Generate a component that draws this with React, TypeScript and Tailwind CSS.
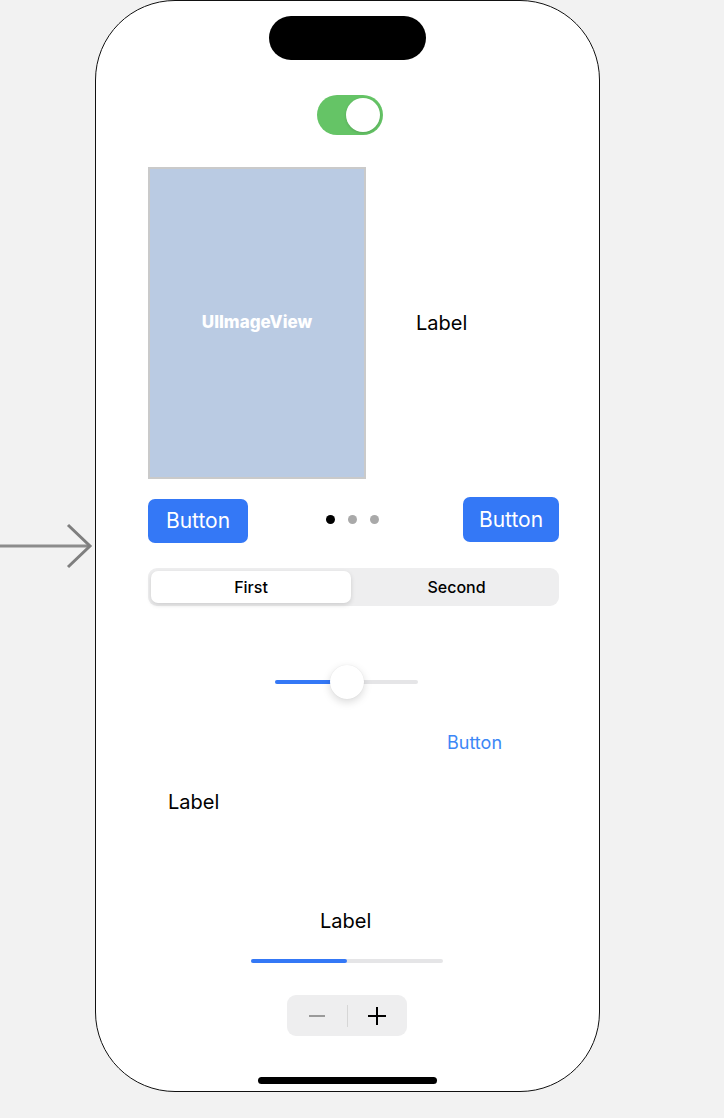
import React from "react";

export default function App() {
  return (
    <div
      className="w-[724px] h-[1118px] bg-[#f2f2f2] flex items-start overflow-hidden"
      style={{ fontFamily: "Inter, 'Noto Sans', sans-serif" }}
    >
      <div className="w-[95px] h-[1092px] flex items-center">
        <svg width="95" height="50" viewBox="0 0 95 50">
          <line x1="0" y1="25" x2="89" y2="25" stroke="#8c8c8c" strokeWidth="3" />
          <polyline points="68,4 90,25 68,46" fill="none" stroke="#7f7f7f" strokeWidth="3" />
        </svg>
      </div>
      <div className="w-[505px] h-[1092px] rounded-[80px] border border-[#111] bg-white flex flex-col">
        {/* notch */}
        <div className="mt-[15px] ml-[173px] w-[157px] h-[44px] rounded-full bg-black" />
        {/* toggle */}
        <div className="mt-[35px] ml-[221px] w-[66px] h-[40px] rounded-full bg-[#65c466] flex items-center justify-end pr-[3px]">
          <div className="w-[34px] h-[34px] rounded-full bg-white shadow-[0_1px_3px_rgba(0,0,0,0.15)]" />
        </div>
        {/* image row */}
        <div className="mt-[32px] flex items-center">
          <div className="ml-[52px] w-[218px] h-[312px] border-2 border-[#cacaca] bg-[#bacbe3] flex items-center justify-center">
            <span className="text-white text-[17px] font-extrabold">UIImageView</span>
          </div>
          <span className="ml-[50px] text-[20px] text-black leading-[24px]">Label</span>
        </div>
        {/* buttons row */}
        <div className="mt-[18px] ml-[52px] w-[411px] flex items-start">
          <button className="mt-[2px] w-[100px] h-[44px] rounded-[7px] bg-[#3478f6] text-white text-[21px] flex items-center justify-center">
            Button
          </button>
          <div className="ml-[78px] h-[45px] flex items-center gap-[13px]">
            <div className="w-[9px] h-[9px] rounded-full bg-black" />
            <div className="w-[9px] h-[9px] rounded-full bg-[#a9a9a9]" />
            <div className="w-[9px] h-[9px] rounded-full bg-[#a9a9a9]" />
          </div>
          <button className="ml-auto w-[96px] h-[45px] rounded-[7px] bg-[#3478f6] text-white text-[21px] flex items-center justify-center">
            Button
          </button>
        </div>
        {/* segmented */}
        <div className="mt-[25px] ml-[52px] w-[411px] h-[38px] rounded-[9px] bg-[#eeeeef] p-[3px] flex">
          <div className="w-[200px] h-full rounded-[7px] bg-white shadow-[0_2px_5px_rgba(0,0,0,0.14)] flex items-center justify-center text-[16px] font-medium text-black">
            First
          </div>
          <div className="flex-1 h-full pl-[6px] flex items-center justify-center text-[16px] font-medium text-black">
            Second
          </div>
        </div>
        {/* slider */}
        <div className="mt-[59px] ml-[179px] w-[143px] h-[34px] relative flex items-center">
          <div className="w-full h-[4px] rounded-full bg-[#e5e5e7] flex">
            <div className="w-[57px] h-full rounded-full bg-[#3478f6]" />
          </div>
          <div className="absolute left-[55px] top-0 w-[34px] h-[34px] rounded-full bg-white shadow-[0_3px_8px_rgba(0,0,0,0.15),0_0_1px_rgba(0,0,0,0.1)]" />
        </div>
        {/* blue text button */}
        <div className="mt-[33px] ml-[351px] text-[18px] leading-[22px] text-[#3c87f6]">Button</div>
        {/* label */}
        <div className="mt-[36px] ml-[72px] text-[20px] leading-[24px] text-black">Label</div>
        {/* center label */}
        <div className="mt-[95px] ml-[224px] text-[20px] leading-[24px] text-black">Label</div>
        {/* progress */}
        <div className="mt-[26px] ml-[155px] w-[192px] h-[4px] rounded-full bg-[#e5e5e7] flex">
          <div className="w-[96px] h-full rounded-full bg-[#3478f6]" />
        </div>
        {/* stepper */}
        <div className="mt-[32px] ml-[191px] w-[120px] h-[41px] rounded-[9px] bg-[#eeeeef] flex items-center">
          <div className="flex-1 flex items-center justify-center">
            <svg width="18" height="18" viewBox="0 0 18 18">
              <line x1="1" y1="9" x2="17" y2="9" stroke="#9a9a9a" strokeWidth="2" />
            </svg>
          </div>
          <div className="w-px h-[22px] bg-[#d6d6d6]" />
          <div className="flex-1 flex items-center justify-center">
            <svg width="18" height="18" viewBox="0 0 18 18">
              <line x1="0" y1="9" x2="18" y2="9" stroke="#000" strokeWidth="2" />
              <line x1="9" y1="0" x2="9" y2="18" stroke="#000" strokeWidth="2" />
            </svg>
          </div>
        </div>
        {/* home indicator */}
        <div className="mt-[41px] ml-[162px] w-[179px] h-[7px] rounded-full bg-black" />
      </div>
    </div>
  );
}
